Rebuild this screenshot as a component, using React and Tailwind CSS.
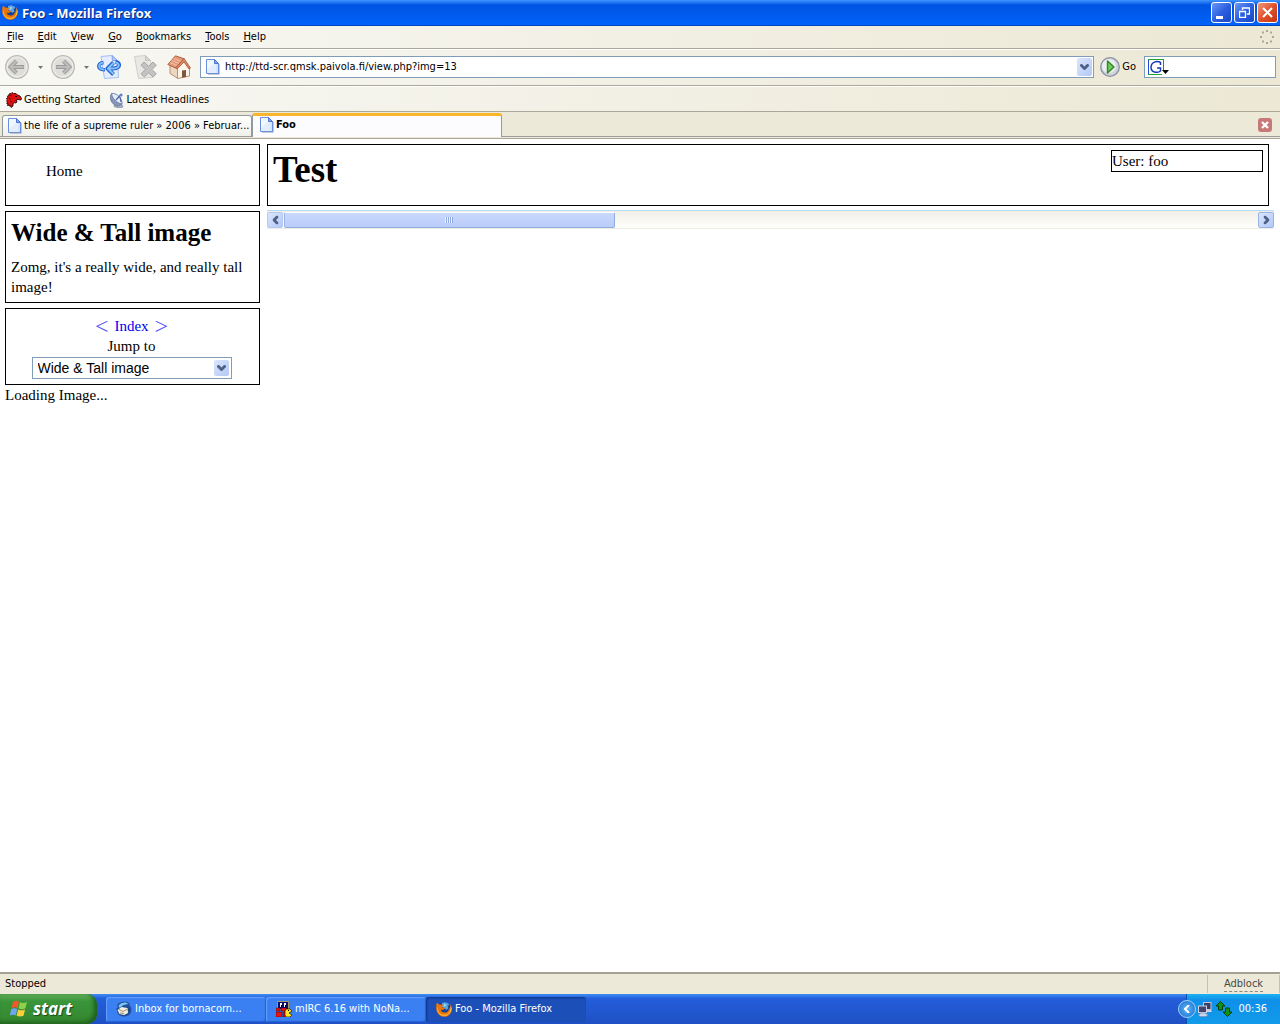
import { useState } from "react";

const menuItems = ["File", "Edit", "View", "Go", "Bookmarks", "Tools", "Help"];
const images = ["Wide & Tall image"];

const FirefoxIcon = ({ className }) => (
  <svg viewBox="0 0 16 16" className={className} aria-hidden="true">
    <circle cx="8.5" cy="7.5" r="6.3" fill="#173f94" />
    <path d="M6 2c3-1.500 6-.5 7.500 2l-2 1 1 2-2 2-2-2-2.500-1z" fill="#5aa7e6" />
    <path d="M8 3l2 .5-.5 1.500L7.500 6z" fill="#a8dcf5" />
    <path
      d="M1 1.500C.2 3 0 5.500.3 8.500 1 13 4.300 15.800 8.300 15.800c4.500 0 7.500-3.500 7.500-7.800 0-2-.6-4-1.800-5 .6 2 .4 4-.4 5.500.1-1-.1-1.800-.5-2.500.2 3.500-1.500 5.600-4.300 5.600-2.300 0-3.800-1.300-4-3 1 .6 2.300.5 3.200-.4l1.200-.9c-.7-1-2-1-3-.8-.2-1.200.5-2 1.500-2.500C6 3.500 4.500 3.300 3.300 3.500 2.200 3 1.400 2.300 1 1.500z"
      fill="#e8740c"
    />
    <path d="M1.500 4C1 8 2.500 12 6 13.500c3.500 1 6.500-.5 8-3-1 3.500-3.500 4.600-6 4.500C3.500 14.600.8 11 1 7z" fill="#fbb829" />
    <path d="M14.500 5c.7 3-.2 6-2.500 8 2-.8 3.800-3 3.500-6z" fill="#fde04d" />
  </svg>
);

const PageIcon = ({ className }) => (
  <svg viewBox="0 0 16 16" className={className} aria-hidden="true">
    <path d="M3 2h8l3.500 3.500V15.500H3z" fill="#8f95ad" />
    <path d="M1.500.5h8l4 4v10h-12z" fill="#d3e4fe" stroke="#6a8fdc" />
    <path d="M2 1h7v4L2 12z" fill="#f1f7ff" />
    <path d="M2 12l7-7h2v9H2z" fill="#e2eeff" />
    <path d="M9.500.5v4h4z" fill="#86a9ee" stroke="#4d76d2" />
  </svg>
);

const Chevron = ({ className }) => (
  <svg viewBox="0 0 9 6" className={className} aria-hidden="true">
    <path d="M0 1l1-1h1l2.500 2.500L7 0h1l1 1v1L5 6H4L0 2z" fill="#4d6185" />
  </svg>
);

const ArrowCircle = ({ flip }) => (
  <svg viewBox="0 0 24 24" className={flip ? "size-6 -scale-x-100" : "size-6"} aria-hidden="true">
    <circle cx="12" cy="12" r="11.300" fill="#e9e8e4" stroke="#bcbbb7" strokeWidth="1.300" />
    <circle cx="12" cy="12" r="9.800" fill="#dfdedb" stroke="#f1f0ec" />
    <path d="M11.500 6L5.500 12l6 6M6 12h13" fill="none" stroke="#9c9b9a" strokeWidth="4" />
    <path d="M11.500 6L5.500 12l6 6M6 12h12.500" fill="none" stroke="#bdbcba" strokeWidth="2.200" />
  </svg>
);

const SmallArrow = () => (
  <svg viewBox="0 0 5 3" className="h-[3px] w-[5px]" aria-hidden="true">
    <path d="M0 0h5L2.500 3z" fill="#77756d" />
  </svg>
);

const ReloadIcon = () => (
  <svg viewBox="0 0 24 24" className="size-6" aria-hidden="true">
    <path d="M4 1.500L15 .5l5.500 5 1 17-14 1z" fill="#e4edff" stroke="#a3bff3" />
    <path d="M15 .5l.5 5 5 .1z" fill="#b8cffa" stroke="#7fa2ea" />
    <g fill="none" strokeLinejoin="round">
      <path d="M6.500 7.500C2.500 8 1.500 10 2 12c.5 1.800 3 2.800 6 2.800" stroke="#2464d4" strokeWidth="3.600" />
      <path d="M16.500 7.500l-6 6 6 6M11 13.500h4.500c4 0 7-1.500 6.500-4-.3-1.500-1.500-2.300-3.500-2.500" stroke="#2464d4" strokeWidth="4" />
      <path d="M6 7.700C2.800 8.300 1.600 10 2.200 12c.5 1.600 2.800 2.500 5.300 2.600" stroke="#86c4fb" strokeWidth="1.700" />
      <path d="M16.500 8l-5.500 5.500 5.500 5.500M11 13.500h4.500c4 0 6.700-1.500 6.200-3.800-.3-1.300-1.200-2-2.700-2.400" stroke="#86c4fb" strokeWidth="1.900" />
    </g>
  </svg>
);

const StopIcon = () => (
  <svg viewBox="0 0 24 24" className="size-6" aria-hidden="true">
    <path d="M1.500 1.500l11-1 5 5 2 17-14 1z" fill="#e9e8e5" stroke="#d0cfcb" />
    <path d="M12.500.5v5h5z" fill="#d6d5d1" stroke="#c6c5c1" />
    <path d="M11 7l4.700 4.300L20 7l3.300 3.200-4.300 4.300 4.300 4.300-3.200 3.200-4.400-4.200-4.400 4.200L8 18.800l4.300-4.300L8 10.200z" fill="#c4c3c1" stroke="#a6a5a3" />
  </svg>
);

const HomeIcon = () => (
  <svg viewBox="0 0 24 24" className="size-6" aria-hidden="true">
    <path d="M3 10v8.500l8 5V12z" fill="#ecd8c2" stroke="#bb8f70" />
    <path d="M10.500 23.500V13l6-7.500 6 8V21z" fill="#fdf5ea" stroke="#bb8f70" />
    <path d="M15 15.500l4-.5v7l-4 .8z" fill="#7e5740" />
    <path d="M8.500.8l8.500 3L8.500 13 .8 9.500z" fill="#e69a7c" stroke="#b45f40" strokeLinejoin="round" />
    <path d="M6.500 3.500l8 3M4.500 5.500l8 3M3 7.500l7.500 3" stroke="#f4c0a9" strokeWidth=".9" />
    <path d="M17 3.500l6.500 9.500-1.500 1-5-7-7 7-1.500-1z" fill="#d98963" stroke="#a95535" strokeLinejoin="round" strokeWidth=".8" />
  </svg>
);

const GoIcon = () => (
  <svg viewBox="0 0 20 20" className="size-5" aria-hidden="true">
    <circle cx="10" cy="10" r="9.300" fill="#d0d3dc" stroke="#8b92a1" strokeWidth="1.300" />
    <circle cx="9" cy="9" r="7" fill="#eceef3" />
    <path d="M7.500 4v12l6.500-6z" fill="#76c860" stroke="#2c8a22" strokeLinejoin="round" strokeWidth="1.400" />
  </svg>
);

const GoogleIcon = () => (
  <svg viewBox="0 0 21 17" className="h-[17px] w-[21px]" aria-hidden="true">
    <path d="M.5 16V.5" stroke="#1f50d8" />
    <path d="M0 .5h16" stroke="#22a336" />
    <path d="M15.500 1v10" stroke="#d93025" />
    <path d="M0 15.500h14" stroke="#22a336" />
    <path d="M12.500 6V3.500C9 1.500 3 2.800 3 8.300c0 5.200 6 6.200 9.500 3.700V9H9" fill="none" stroke="#1a3bb4" strokeWidth="1.500" />
    <path d="M14 11h7l-3.500 4z" fill="#000" />
  </svg>
);

const MozillaIcon = () => (
  <svg viewBox="0 0 16 16" className="size-4" aria-hidden="true">
    <path
      d="M3 2l2-.5L6 .5l1.500 1H10l1.500 1.500 2.500 1 1.500 2.500-.5 1.500-3-.5-2 .5 1 2-1.500 1-1.500-.5-1 1.500v2l-2 1.500-.5-2-1.500.5L3 13l-1.500.5L2 11.500H.8L1.500 10 .5 9l1-1-1-1.500 1.500-1L1.500 4 3 3.500z"
      fill="#dd1010"
      stroke="#2a0606"
      strokeWidth=".9"
    />
    <path d="M4 3l2 1M3 6l2 1M4 9l2 1" stroke="#7c0909" />
    <path d="M9 4h2v1H9z" fill="#000" />
  </svg>
);

const FeedIcon = () => (
  <svg viewBox="0 0 16 16" className="size-4" aria-hidden="true">
    <path d="M6 12l-1 2.500 5 1.500 4-1-1.500-3z" fill="#b5b9c6" stroke="#7a8193" strokeWidth=".7" />
    <path d="M2.500 1.500C0 5 1.500 12 8 14c2 .3 4-.5 5-2z" fill="#8496ba" stroke="#68789b" strokeWidth=".8" />
    <path d="M2.500 1.500C3 6 7 11 13 12 13.500 7 8 .5 2.500 1.500z" fill="#e4ebf7" stroke="#7587ac" />
    <path d="M7 8l4-4.500M11 5l1 5" stroke="#4b66a0" strokeWidth="1.200" />
    <circle cx="12" cy="3" r="1.600" fill="#5d85d0" />
  </svg>
);

const Throbber = () => (
  <svg viewBox="0 0 14 14" className="size-[14px]" aria-hidden="true">
    <path
      d="M6 0h2v2H6zM10 1.500h2v2h-2zM12 6h2v2h-2zM10 10.500h2v2h-2zM6 12h2v2H6zM2 10.500h2v2H2zM0 6h2v2H0zM2 1.500h2v2H2z"
      fill="#aaa795"
    />
  </svg>
);

const WindowsFlag = () => (
  <svg viewBox="0 0 18 18" className="size-[18px]" aria-hidden="true">
    <path d="M3 2c2-1.500 4-1.500 6-.3L7.500 8C5.500 7 3.500 7 1.500 8.300z" fill="#f2592a" />
    <path d="M10 2.200c2.300 1.200 4.500 1 7-.2l-1.600 6.300c-2.300 1.200-4.500 1.200-6.900 0z" fill="#8fd14a" />
    <path d="M1.200 9.300c2-1.300 4-1.300 6-.3l-1.500 6.400c-2-1-4-.9-6 .3z" fill="#6fa5f5" />
    <path d="M8.200 9.400c2.300 1.200 4.500 1.200 6.900 0l-1.600 6.300c-2.400 1.200-4.600 1-6.900-.1z" fill="#fbd03a" />
  </svg>
);

const ThunderbirdIcon = () => (
  <svg viewBox="0 0 16 16" className="size-4 shrink-0" aria-hidden="true">
    <path d="M1 4c3-4 10-5 13-1l-1 .5c2 2 3 5 2 8-1 3-5 4.500-8 4-4-.5-6-3-6-6L0 8l2-2z" fill="#20509c" />
    <path d="M2.500 4.500c3-3.500 7.500-4 10-1.500l-5 1-4 3z" fill="#7cc6f3" />
    <path d="M1.500 9l4-3 6 1 .5 5-4 2-4.500-1z" fill="#f1eee2" />
    <path d="M3 8.500l4 2 4.500-2.500M4 12l4 .5" fill="none" stroke="#a88c67" />
    <path d="M9 5l4 2-1 4 2-3z" fill="#16336d" />
  </svg>
);

const MircIcon = () => (
  <svg viewBox="0 0 16 16" className="size-4 shrink-0" aria-hidden="true">
    <path d="M1.500.5h11v8h-11z" fill="#0a0a6c" stroke="#a59c68" />
    <path d="M4 2h2v4H4zM8 2h2v4H8z" fill="#fff" />
    <path d="M5 4h1v2H5zM9 4h1v2H9z" fill="#000" />
    <path d="M0 7h4v3H0zM5 7h6v2H9v7H7v-6H5zM0 11h6v5H0z" fill="#ee1111" stroke="#400" strokeWidth=".5" />
    <path d="M10 8h4l2 2-3 2 3 2-2 2h-4l-1-2v-4z" fill="#ffe326" stroke="#000" strokeWidth=".6" />
    <path d="M12 9h1v1h-1z" fill="#000" />
  </svg>
);

const NetworkIcon = () => (
  <svg viewBox="0 0 16 16" className="size-4" aria-hidden="true">
    <path d="M6 1h8.500v8H6z" fill="#bfc5da" />
    <path d="M7 2h6.500v6H7z" fill="#3b3f68" />
    <path d="M9 9h5l1 2H8z" fill="#cfd4e4" />
    <path d="M1 4.500h9V12H1z" fill="#ced3e3" />
    <path d="M2 5.500h7V11H2z" fill="#44466f" />
    <path d="M4 12h4l3 2-2 1.500H3L1.500 14z" fill="#cdd3e8" stroke="#7c88b8" strokeWidth=".6" />
  </svg>
);

const TransferIcon = () => (
  <svg viewBox="0 0 16 16" className="size-4" aria-hidden="true">
    <path d="M4.500.5L9 5H6.500v4h-4V5H0z" fill="#0b9512" stroke="#033d08" strokeLinejoin="round" />
    <path d="M11.500 15.500L7 11h2.500V7h4v4H16z" fill="#0b9512" stroke="#033d08" strokeLinejoin="round" />
  </svg>
);

const tasks = [
  { title: "Inbox for bornacorn...", icon: <ThunderbirdIcon />, active: false },
  { title: "mIRC 6.16 with NoNa...", icon: <MircIcon />, active: false },
  { title: "Foo - Mozilla Firefox", icon: <FirefoxIcon className="size-4 shrink-0" />, active: true },
];

const TitleBar = () => (
  <header className="flex h-[26px] items-center border-b border-[#0445bd] bg-linear-to-b from-[#3f94ff] via-[#0054e3] via-20% to-[#0063fa] px-[2px]">
    <FirefoxIcon className="mb-[2px] size-4" />
    <h1 className="ml-1 flex-1 font-['Open_Sans','Noto_Sans',sans-serif] text-[13px] font-bold text-white [text-shadow:1px_1px_0_#0a2a7a]">
      Foo - Mozilla Firefox
    </h1>
    <div className="flex gap-[2px]">
      <button aria-label="Minimize" className="flex size-[21px] items-end rounded-[3px] border border-white bg-linear-to-br from-[#6c95f5] via-[#2c60e0] to-[#1846c8] pb-[3px] pl-[4px]">
        <span className="h-[3px] w-[7px] bg-white" />
      </button>
      <button aria-label="Restore" className="flex size-[21px] items-center justify-center rounded-[3px] border border-white bg-linear-to-br from-[#6c95f5] via-[#2c60e0] to-[#1846c8]">
        <svg viewBox="0 0 11 11" className="size-[11px]" aria-hidden="true">
          <path d="M3.500 3V1h7v6H8M3 .8h8M.5 4.500h6v6h-6zM0 4.300h7" fill="none" stroke="#fff" strokeWidth="1.300" />
        </svg>
      </button>
      <button aria-label="Close" className="flex size-[21px] items-center justify-center rounded-[3px] border border-white bg-linear-to-br from-[#f0957a] via-[#e0512b] to-[#c4330e]">
        <svg viewBox="0 0 11 11" className="size-[11px]" aria-hidden="true">
          <path d="M1 1l9 9M10 1l-9 9" stroke="#fff" strokeWidth="2" />
        </svg>
      </button>
    </div>
  </header>
);

const MenuBar = () => (
  <nav className="flex h-[23px] items-center gap-[14px] border-b border-[#aca899] pr-[6px] pl-[7px]">
    {menuItems.map((item) => (
      <button key={item}>
        <span className="underline underline-offset-1">{item[0]}</span>
        {item.slice(1)}
      </button>
    ))}
    <span className="ml-auto">
      <Throbber />
    </span>
  </nav>
);

const NavBar = () => {
  const [url, setUrl] = useState("http://ttd-scr.qmsk.paivola.fi/view.php?img=13");

  return (
    <div className="flex h-[37px] items-center border-t border-b border-t-white border-b-[#aca899] pr-1 pb-px pl-[5px]">
      <button aria-label="Back"><ArrowCircle /></button>
      <button aria-label="Back history" className="flex w-[22px] justify-center"><SmallArrow /></button>
      <button aria-label="Forward"><ArrowCircle flip /></button>
      <button aria-label="Forward history" className="flex w-[22px] justify-center"><SmallArrow /></button>
      <button aria-label="Reload"><ReloadIcon /></button>
      <button aria-label="Stop" className="ml-3"><StopIcon /></button>
      <button aria-label="Home" className="ml-[10px]"><HomeIcon /></button>
      <div className="ml-[9px] flex h-[22px] flex-1 items-center border border-[#7f9db9] bg-white pr-px pl-1">
        <PageIcon className="size-4" />
        <input
          aria-label="Location"
          value={url}
          onChange={(e) => setUrl(e.target.value)}
          className="ml-1 min-w-0 flex-1 outline-none"
        />
        <button aria-label="Show history" className="flex h-[18px] w-[15px] items-center justify-center rounded-[2px] bg-linear-to-br from-[#dbe6fe] to-[#b4c8f6]">
          <Chevron className="h-[6px] w-[9px]" />
        </button>
      </div>
      <button className="ml-[6px] flex items-center gap-[2px]">
        <GoIcon />
        Go
      </button>
      <div className="ml-2 flex h-[22px] w-[132px] items-center border border-[#7f9db9] bg-white pl-[3px]">
        <button aria-label="Search engine"><GoogleIcon /></button>
        <input aria-label="Search" className="min-w-0 flex-1 outline-none" />
      </div>
    </div>
  );
};

const BookmarksBar = () => (
  <div className="flex h-[26px] items-center gap-2 border-t border-b border-t-white border-b-[#aca899] pt-px pl-[6px]">
    <a href="#start" className="flex items-center gap-[2px]"><MozillaIcon />Getting Started</a>
    <a href="#headlines" className="flex items-center gap-[2px]"><FeedIcon />Latest Headlines</a>
  </div>
);

const TabBar = () => (
  <div className="flex h-[27px] items-end border-b border-[#aca899] bg-[#ece9d8] pb-px">
    <div className="flex flex-1 items-end border-b border-[#9d9da1] pl-[2px]">
      <button className="flex h-[21px] w-[250px] items-center gap-[1px] rounded-t-[3px] border border-b-0 border-[#919b9c] bg-linear-to-b from-white to-[#f0f0ea] pl-1">
        <PageIcon className="size-4 shrink-0" />
        <span className="whitespace-nowrap">the life of a supreme ruler » 2006 » Februar...</span>
      </button>
      <button className="-mb-px flex h-6 w-[250px] items-center gap-[1px] rounded-t-[3px] border-x border-t-3 border-[#919b9c] border-t-[#fab52a] bg-[#fcfcfe] pb-1 pl-[6px] font-bold">
        <PageIcon className="size-4" />
        Foo
      </button>
      <button aria-label="Close tab" className="mr-2 mb-1 ml-auto flex size-[14px] items-center justify-center rounded-[3px] bg-[#c77878]">
        <svg viewBox="0 0 8 8" className="size-2" aria-hidden="true">
          <path d="M1 1l6 6M7 1L1 7" stroke="#fff" strokeWidth="2.400" />
        </svg>
      </button>
    </div>
  </div>
);

const ScrollBar = () => (
  <div className="mt-1 flex h-[19px] items-center border-t border-b border-t-[#b5dcf5] border-b-[#eeede5] bg-linear-to-b from-[#f1efe8] to-[#fefefb]">
    <button aria-label="Scroll left" className="flex h-4 w-[16px] items-center justify-center rounded-[2px] border border-[#b6c9f3] bg-linear-to-br from-[#dbe6fe] to-[#b4c8f6]">
      <Chevron className="h-[6px] w-[9px] rotate-90" />
    </button>
    <div className="flex-1 px-[1px]">
      <div className="flex h-4 w-[34%] items-center justify-center rounded-[2px] border border-[#8fadda] border-t-white border-l-[#98b3e3] bg-linear-to-b from-[#c9d8fc] to-[#b9cdfa]">
        {[0, 1, 2, 3].map((grip) => (
          <span key={grip} className="h-[6px] w-[2px] border-r border-[#8fa8e0] bg-[#eef4fe]" />
        ))}
      </div>
    </div>
    <button aria-label="Scroll right" className="flex h-4 w-[16px] items-center justify-center rounded-[2px] border border-[#9ab3e5] bg-linear-to-br from-[#dbe6fe] to-[#b4c8f6]">
      <Chevron className="h-[6px] w-[9px] -rotate-90" />
    </button>
  </div>
);

const Page = () => {
  const [image, setImage] = useState(images[0]);

  return (
    <main className="flex flex-1 items-start gap-[7px] bg-white pt-[5px] pr-[6px] pl-[5px] font-['Liberation_Serif',serif] text-[15px] leading-5">
      <aside className="w-[255px] shrink-0">
        <div className="mb-[5px] h-[62px] border border-black px-10 py-4">
          <a href="#home">Home</a>
        </div>
        <section className="mb-[5px] border border-black px-[5px] pt-[6px] pb-[5px]">
          <h2 className="mb-[9px] text-[25px] leading-[30px] font-bold">Wide &amp; Tall image</h2>
          <p>Zomg, it's a really wide, and really tall image!</p>
        </section>
        <div className="flex flex-col items-center border border-black pt-[7px] pr-[7px] pb-[5px] pl-[5px]">
          <div className="flex gap-[6px] text-[#0000ee]">
            <a href="#prev" className="text-[24px] text-[#5555f5]">&lt;</a>
            <a href="#index">Index</a>
            <a href="#next" className="text-[24px] text-[#5555f5]">&gt;</a>
          </div>
          <label htmlFor="jump" className="leading-[21px]">Jump to</label>
          <div className="relative">
            <select
              id="jump"
              value={image}
              onChange={(e) => setImage(e.target.value)}
              className="block h-[22px] w-[200px] appearance-none border border-[#7f9db9] bg-white pl-[5px] font-['Liberation_Sans',sans-serif] text-[14px] leading-5"
            >
              {images.map((name) => (
                <option key={name}>{name}</option>
              ))}
            </select>
            <span className="pointer-events-none absolute top-[3px] right-[3px] flex h-4 w-[15px] items-center justify-center rounded-[2px] bg-linear-to-br from-[#dbe6fe] to-[#b4c8f6]">
              <Chevron className="h-[6px] w-[9px]" />
            </span>
          </div>
        </div>
        <p>Loading Image...</p>
      </aside>
      <div className="min-w-0 flex-1">
        <div className="mr-[5px] flex h-[62px] items-start justify-between border border-black p-[5px]">
          <h1 className="text-[37px] leading-10 font-bold">Test</h1>
          <div className="w-[152px] border border-black">User: foo</div>
        </div>
        <ScrollBar />
      </div>
    </main>
  );
};

const StatusBar = () => (
  <div className="flex h-[22px] items-center border-t-2 border-[#a5a294] bg-[#ece9d8] pl-[5px]">
    <span className="flex-1">Stopped</span>
    <span className="flex h-[18px] w-[73px] items-center justify-center border-x border-[#c5c2b2] text-[#4a483e]">
      <button className="border-b border-dashed border-[#8c897c] leading-[14px]">Adblock</button>
    </span>
  </div>
);

const TaskBar = () => (
  <footer className="flex h-[30px] bg-linear-to-b from-[#3f8cf3] via-[#245edb] via-15% to-[#1f50c4] text-white">
    <button className="flex w-[97px] items-center gap-[5px] rounded-r-[10px] bg-linear-to-b from-[#5eac56] via-[#3a953a] via-25% to-[#34852f] pl-[10px] font-['Open_Sans','Noto_Sans',sans-serif] text-[17px] leading-5 font-bold italic shadow-[inset_-3px_-2px_4px_#1e601c] [text-shadow:1px_1px_1px_#1a4a17]">
      <WindowsFlag />
      start
    </button>
    <div className="ml-[9px] flex flex-1 items-center">
      {tasks.map((task) => (
        <button
          key={task.title}
          className={`flex h-[25px] w-[160px] items-center gap-[3px] rounded-[3px] pl-[10px] ${
            task.active
              ? "bg-[#1c4fb8] shadow-[inset_1px_1px_2px_#0d3585]"
              : "bg-[#3a80f3] shadow-[inset_1px_1px_1px_#64a0fa,inset_-1px_-1px_1px_#2560d0]"
          }`}
        >
          {task.icon}
          {task.title}
        </button>
      ))}
    </div>
    <div className="flex items-center border-l border-[#0b4fae] bg-linear-to-b from-[#1cb2f3] via-[#0f8fe9] via-20% to-[#129be9] pr-[13px]">
      <button aria-label="Show hidden icons" className="-ml-[9px] flex size-[18px] items-center justify-center rounded-full border border-[#9fd3fb] bg-radial from-[#5db7fb] to-[#1669c8]">
        <svg viewBox="0 0 6 8" className="h-2 w-[6px]" aria-hidden="true">
          <path d="M5 0L1 4l4 4" fill="none" stroke="#fff" strokeWidth="2" />
        </svg>
      </button>
      <span className="ml-px"><NetworkIcon /></span>
      <span className="ml-[3px]"><TransferIcon /></span>
      <time className="ml-[6px]">00:36</time>
    </div>
  </footer>
);

const App = () => (
  <div className="flex min-h-screen flex-col bg-[#ece9d8] font-['DejaVu_Sans_Condensed','Noto_Sans',sans-serif] text-[11px] leading-4 text-black">
    <TitleBar />
    <div className="bg-linear-to-r from-[#f8f8f4] to-[#ece8d5]">
      <MenuBar />
      <NavBar />
      <BookmarksBar />
    </div>
    <TabBar />
    <Page />
    <StatusBar />
    <TaskBar />
  </div>
);

export default App;
